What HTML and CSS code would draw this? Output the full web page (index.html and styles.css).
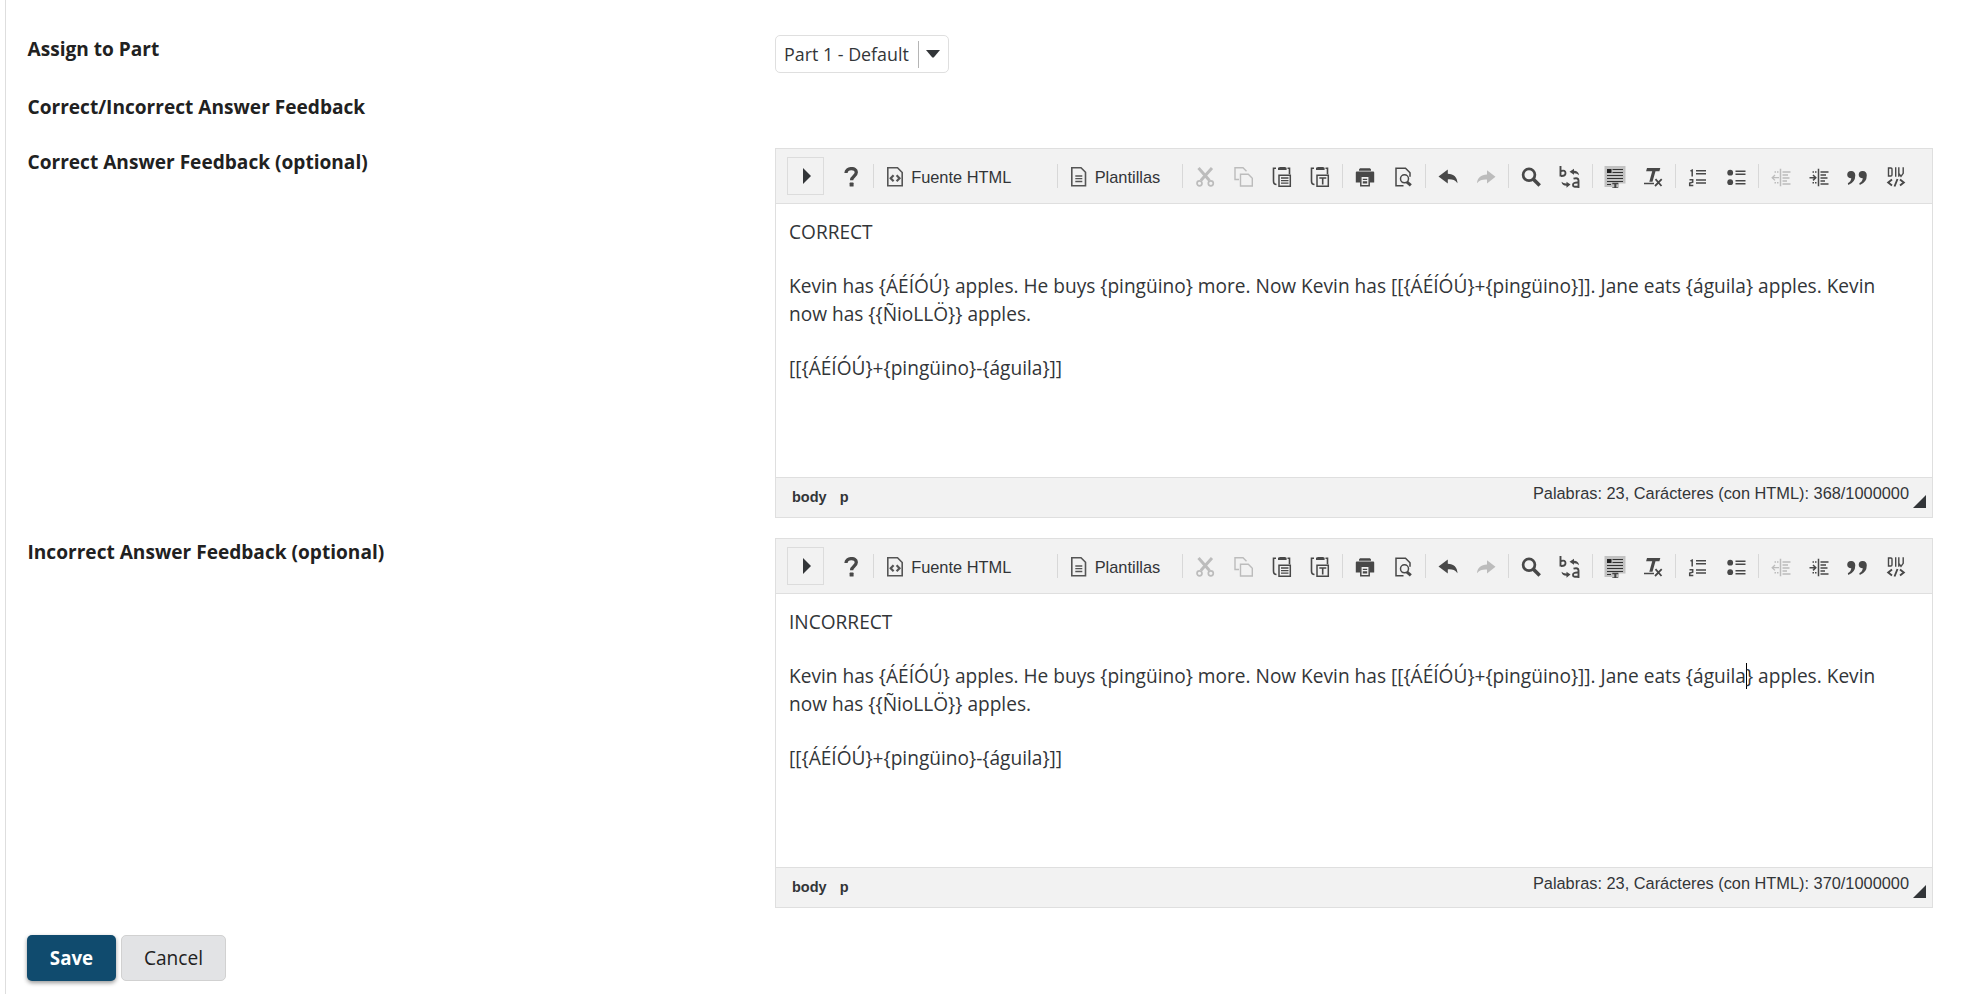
FILE: index.html
```
<!DOCTYPE html>
<html lang="en">
<head>
<meta charset="utf-8">
<title>Answer Feedback</title>
<link rel="stylesheet" href="styles.css">
</head>
<body>
<svg class="sprite" aria-hidden="true">
  <symbol id="help" viewBox="0 0 20 20"><path d="M5 6C5 0.5 15.3 0 15.3 5.3C15.3 9.3 10.7 9 10.6 13.2" fill="none" stroke="currentColor" stroke-width="3.300"/><rect x="8.600" y="15.600" width="4" height="4" rx=".7" fill="currentColor"/></symbol>
  <symbol id="source" viewBox="0 0 20 20"><path d="M2.800 .800h9.700l4.700 4.700V18.800H2.800z" fill="none" stroke="currentColor" stroke-width="1.600"/><path d="M8.600 8.300L5.700 11.300l2.900 3M11.600 8.300l2.900 3-2.900 3" fill="none" stroke="currentColor" stroke-width="2.200"/></symbol>
  <symbol id="template" viewBox="0 0 20 20"><path d="M2.800 .800h9.200l4.500 4.500V18.800H2.800z" fill="none" stroke="currentColor" stroke-width="1.600"/><path d="M6.300 9h7M6.300 11.700h7M6.300 14.500h7" stroke="currentColor" stroke-width="1.300"/></symbol>
  <symbol id="cut" viewBox="0 0 20 20"><path d="M3.500 1l11 12.500M17 1L5.800 13.500" fill="none" stroke="currentColor" stroke-width="3"/><circle cx="4.500" cy="16.300" r="2.500" fill="none" stroke="currentColor" stroke-width="1.700"/><circle cx="15.800" cy="16.300" r="2.500" fill="none" stroke="currentColor" stroke-width="1.700"/></symbol>
  <symbol id="copy" viewBox="0 0 20 20"><path d="M5 12.500H1V.700h8l3.500 3.500M6.500 7.200h7.800l4 4V19H6.500z" fill="none" stroke="currentColor" stroke-width="1.400"/></symbol>
  <symbol id="clipboard" viewBox="0 0 20 20"><path d="M4 1.300H1.500V14q0 3.500 3 3.500M15.500 1.300h2v6" fill="none" stroke="currentColor" stroke-width="1.600"/><path d="M6 3V.800L8 0h5l1.600.800V3z" fill="currentColor"/><path d="M7 8.300h11.300V19.200H7z" fill="none" stroke="currentColor" stroke-width="1.500"/></symbol>
  <symbol id="paste" viewBox="0 0 20 20"><use href="#clipboard"/><path d="M9 11h7.500M9 13.600h7.500M9 16.200h7.500" stroke="currentColor" stroke-width="1.300"/></symbol>
  <symbol id="pastetext" viewBox="0 0 20 20"><use href="#clipboard"/><path d="M9.300 11h7M12.700 11v6.500" stroke="currentColor" stroke-width="1.600"/></symbol>
  <symbol id="print" viewBox="0 0 20 20"><path d="M4 2.500L5 1.200h10l1 1.300v1.300H4zM.800 5.500q0-.900 1-.900h16.400q1 0 1 .900v10H15V9H5v6.500H.800z" fill="currentColor"/><path d="M5.800 9.300h8.400v9.500H5.800z" fill="none" stroke="currentColor" stroke-width="1.500"/><path d="M7.800 11.700h4.400v1.300H7.800zM7.800 14.300h4.400v2.300H7.800z" fill="currentColor"/></symbol>
  <symbol id="preview" viewBox="0 0 20 20"><path d="M10.500 18.800H3V1.200h9.500l4.500 4.500v4" fill="none" stroke="currentColor" stroke-width="1.500"/><circle cx="11.500" cy="11.800" r="4" fill="none" stroke="currentColor" stroke-width="1.500"/><path d="M13.800 14.800l4 3.500" stroke="currentColor" stroke-width="3"/></symbol>
  <symbol id="undo" viewBox="0 0 20 20"><path d="M.500 9.500L9.800 2.500v4.200c6 .300 9.600 3.500 9.700 9.500-2.500-3.500-5.500-4-9.700-3.800v4.100z" fill="currentColor"/></symbol>
  <symbol id="redo" viewBox="0 0 20 20"><path d="M19.500 9.800L11 3.300v4.200c-6 .300-9.800 3.500-10 8.800 2.500-3.500 5.800-4 10-3.800v4z" fill="currentColor"/></symbol>
  <symbol id="find" viewBox="0 0 20 20"><circle cx="8" cy="7.800" r="5.900" fill="none" stroke="currentColor" stroke-width="2.700"/><path d="M12.400 12.300l6.300 6.200" stroke="currentColor" stroke-width="3.600"/></symbol>
  <symbol id="replace" viewBox="0 0 22 22"><path d="M1.500 0v10.500M2 5q4.500-1.300 4.500 2T2 10M14.500 12.700q5-1.300 5 1.800V22M19 16.500q-5-.200-5 2.400t5 1.600" fill="none" stroke="currentColor" stroke-width="1.900"/><path d="M10.500 5.700l4.500-3v2q4.500 0 5 4.500-2-2.200-5-2v1.500zM11.500 18.500l-4 3.200v-2q-4.500 0-5-4 2 2 5 1.800v-1.700z" fill="currentColor"/></symbol>
  <symbol id="selectall" viewBox="0 0 22 22"><path d="M.500 0h21v17.500H15V21H.500z" fill="#c2c2c2"/><path d="M3 3h4.500v4H3z" fill="#222"/><path d="M8.500 3.500H19M8.500 6.500H19M3 9.500h16M3 12.500h16M3 15.500h16M3 18.500h4" stroke="#333" stroke-width="1"/><path d="M8.300 16.800h6v1.500h-2v3h2V22h-6v-.800h2v-3h-2z" fill="#444"/></symbol>
  <symbol id="noformat" viewBox="0 0 20 20"><path d="M4 1h13.300l-.900 3.300H12.500L9.500 14.700H6.300L9.200 4.300H3.100zM1 15.800h10v1.500H1z" fill="currentColor"/><path d="M12.500 12.200l6 6.800M18.700 12.200l-6.700 6.800" stroke="currentColor" stroke-width="1.800"/></symbol>
  <symbol id="numbered" viewBox="0 0 20 20"><path d="M2.500 4l1.700-.800v6.300M1.500 12.800h3.200v2.300l-3 1v2.300H5.300" fill="none" stroke="currentColor" stroke-width="1.500"/><path d="M8 3.800h10M8 6.800h10M8 12.900h10M8 15.900h10" stroke="currentColor" stroke-width="1.500"/></symbol>
  <symbol id="bulleted" viewBox="0 0 20 20"><circle cx="4.200" cy="5.700" r="2.900" fill="currentColor"/><circle cx="4.200" cy="15.200" r="2.900" fill="currentColor"/><path d="M9.500 4.200h10M9.500 7.200h10M9.500 13.700h10M9.500 16.700h10" stroke="currentColor" stroke-width="1.500"/></symbol>
  <symbol id="indentlines" viewBox="0 0 20 20"><path d="M9.500 1.700v17.500M11.500 5h8M11.500 8h5.500M11.500 11h7M11.500 14h4.500M11.500 17h8" stroke="currentColor" stroke-width="1.500"/><path d="M3.500 5h4.500M3.500 15.800h4.500" stroke="currentColor" stroke-width="1.500" stroke-dasharray="1.500 1"/></symbol>
  <symbol id="outdent" viewBox="0 0 20 20"><use href="#indentlines"/><path d="M8 10.700H1.500M4 8L1.200 10.700 4 13.400" fill="none" stroke="currentColor" stroke-width="1.300"/></symbol>
  <symbol id="indent" viewBox="0 0 20 20"><use href="#indentlines"/><path d="M.500 10.700H6M4 8l2.800 2.700L4 13.400" fill="none" stroke="currentColor" stroke-width="1.500"/></symbol>
  <symbol id="quote" viewBox="0 0 20 20"><path id="comma" d="M4.300 4A3.900 3.900 0 0 0 .200 7.700Q.300 11 4.300 11.300Q4 14.800.800 16.200L1.300 18Q8.300 15.500 8.300 8.300Q8.200 4.200 4.300 4z" fill="currentColor"/><use href="#comma" x="11.500"/></symbol>
  <symbol id="div" viewBox="0 0 20 20"><path d="M2.500 1v8h2.300q1.200 0 1.200-1.300V2.300Q6 1 4.800 1zM9.700.300v9.400M12.800 9.700V.300M12.800 .300v6l2.200 3 2.200-3v-6" fill="none" stroke="currentColor" stroke-width="1.400"/><path d="M6 12.500l-3.800 3 3.800 3M14 12.500l3.800 3-3.800 3M11.500 12l-3 7.500" fill="none" stroke="currentColor" stroke-width="1.900"/></symbol>
</svg>

<main class="panel">
  <div class="row row-part">
    <div class="label">Assign to Part</div>
    <div class="select"><span class="select-text">Part 1 - Default</span><svg class="caret" viewBox="0 0 14 8"><path d="M0 0h14L7.700 7.500H6.300z" fill="#323538"/></svg></div>
  </div>
  <div class="row row-heading"><div class="label">Correct/Incorrect Answer Feedback</div></div>

  <div class="row row-editor">
    <div class="label">Correct Answer Feedback (optional)</div>
    <section class="editor">
      <div class="toolbar">
        <span class="expand"><svg viewBox="0 0 8 16"><path d="M0 0l8 8-8 8z" fill="#323538"/></svg></span>
        <span class="btn btn-help"><svg><use href="#help"/></svg></span><i class="sep"></i>
        <span class="textbtn textbtn-source"><svg><use href="#source"/></svg>Fuente HTML</span><i class="sep"></i>
        <span class="textbtn textbtn-template"><svg><use href="#template"/></svg>Plantillas</span><i class="sep"></i>
        <span class="btn off"><svg><use href="#cut"/></svg></span><span class="btn off"><svg><use href="#copy"/></svg></span><span class="btn"><svg><use href="#paste"/></svg></span><span class="btn"><svg><use href="#pastetext"/></svg></span><i class="sep"></i>
        <span class="btn"><svg><use href="#print"/></svg></span><span class="btn"><svg><use href="#preview"/></svg></span><i class="sep"></i>
        <span class="btn"><svg><use href="#undo"/></svg></span><span class="btn off"><svg><use href="#redo"/></svg></span><i class="sep"></i>
        <span class="btn"><svg><use href="#find"/></svg></span><span class="btn large"><svg><use href="#replace"/></svg></span><i class="sep"></i>
        <span class="btn large"><svg><use href="#selectall"/></svg></span><span class="btn"><svg><use href="#noformat"/></svg></span><i class="sep"></i>
        <span class="btn"><svg><use href="#numbered"/></svg></span><span class="btn"><svg><use href="#bulleted"/></svg></span><i class="sep"></i>
        <span class="btn off"><svg><use href="#outdent"/></svg></span><span class="btn"><svg><use href="#indent"/></svg></span><span class="btn"><svg><use href="#quote"/></svg></span><span class="btn"><svg><use href="#div"/></svg></span>
      </div>
      <div class="content">
        <p>CORRECT</p>
        <p>Kevin has {ÁÉÍÓÚ} apples. He buys {pingüino} more. Now Kevin has [[{ÁÉÍÓÚ}+{pingüino}]]. Jane eats {águila} apples. Kevin<br>now has {{ÑioLLÖ}} apples.</p>
        <p>[[{ÁÉÍÓÚ}+{pingüino}-{águila}]]</p>
      </div>
      <div class="status"><span class="path">body</span><span class="path">p</span><span class="count">Palabras: 23, Carácteres (con HTML): 368/1000000</span><svg class="grip" viewBox="0 0 13 13"><path d="M13 0v13H0z" fill="#323538"/></svg></div>
    </section>
  </div>

  <div class="row row-editor">
    <div class="label">Incorrect Answer Feedback (optional)</div>
    <section class="editor">
      <div class="toolbar">
        <span class="expand"><svg viewBox="0 0 8 16"><path d="M0 0l8 8-8 8z" fill="#323538"/></svg></span>
        <span class="btn btn-help"><svg><use href="#help"/></svg></span><i class="sep"></i>
        <span class="textbtn textbtn-source"><svg><use href="#source"/></svg>Fuente HTML</span><i class="sep"></i>
        <span class="textbtn textbtn-template"><svg><use href="#template"/></svg>Plantillas</span><i class="sep"></i>
        <span class="btn off"><svg><use href="#cut"/></svg></span><span class="btn off"><svg><use href="#copy"/></svg></span><span class="btn"><svg><use href="#paste"/></svg></span><span class="btn"><svg><use href="#pastetext"/></svg></span><i class="sep"></i>
        <span class="btn"><svg><use href="#print"/></svg></span><span class="btn"><svg><use href="#preview"/></svg></span><i class="sep"></i>
        <span class="btn"><svg><use href="#undo"/></svg></span><span class="btn off"><svg><use href="#redo"/></svg></span><i class="sep"></i>
        <span class="btn"><svg><use href="#find"/></svg></span><span class="btn large"><svg><use href="#replace"/></svg></span><i class="sep"></i>
        <span class="btn large"><svg><use href="#selectall"/></svg></span><span class="btn"><svg><use href="#noformat"/></svg></span><i class="sep"></i>
        <span class="btn"><svg><use href="#numbered"/></svg></span><span class="btn"><svg><use href="#bulleted"/></svg></span><i class="sep"></i>
        <span class="btn off"><svg><use href="#outdent"/></svg></span><span class="btn"><svg><use href="#indent"/></svg></span><span class="btn"><svg><use href="#quote"/></svg></span><span class="btn"><svg><use href="#div"/></svg></span>
      </div>
      <div class="content">
        <p>INCORRECT</p>
        <p>Kevin has {ÁÉÍÓÚ} apples. He buys {pingüino} more. Now Kevin has [[{ÁÉÍÓÚ}+{pingüino}]]. Jane eats {águila<span class="cursor"></span>} apples. Kevin<br>now has {{ÑioLLÖ}} apples.</p>
        <p>[[{ÁÉÍÓÚ}+{pingüino}-{águila}]]</p>
      </div>
      <div class="status"><span class="path">body</span><span class="path">p</span><span class="count">Palabras: 23, Carácteres (con HTML): 370/1000000</span><svg class="grip" viewBox="0 0 13 13"><path d="M13 0v13H0z" fill="#323538"/></svg></div>
    </section>
  </div>

  <div class="actions"><button class="action save">Save</button><button class="action cancel">Cancel</button></div>
</main>
</body>
</html>
```

FILE: styles.css
```
* { box-sizing: border-box; }
body {
  margin: 0;
  background: #fff;
  color: #212121;
  font-family: "Open Sans", sans-serif;
  font-size: 19.100px;
}
.sprite { display: none; }
.panel {
  height: 994px;
  margin-left: 5px;
  padding: 35px 44px 0 21px;
  border-left: 1px solid #dedede;
  overflow: hidden;
}
.row { display: grid; grid-template-columns: 748px 1158px; }
.row-part { height: 58px; }
.row-heading { height: 55px; }
.row-editor { height: 390px; }
.label { padding-left: .5px; font-weight: 700; font-size: 19.100px; line-height: 29px; white-space: nowrap; }
.select {
  display: flex;
  align-items: center;
  width: 174px;
  height: 38px;
  padding-left: 8px;
  border: 1px solid #dfdfdf;
  border-radius: 5px;
  color: #323538;
}
.select-text {
  flex: none;
  height: 27px;
  width: 135px;
  border-right: 1px solid #b5b5b5;
  font-size: 17.850px;
  line-height: 27px;
  white-space: nowrap;
}
.caret { width: 14px; height: 8px; margin-left: 7px; }
.editor {
  display: flex;
  flex-direction: column;
  height: 370px;
  border: 1px solid #dfdfdf;
}
.toolbar {
  display: flex;
  align-items: center;
  flex: none;
  height: 55px;
  padding-left: 11px;
  background: #f2f2f2;
  border-bottom: 1px solid #dfdfdf;
  color: #484848;
}
.expand {
  display: flex;
  align-items: center;
  justify-content: center;
  width: 37px;
  height: 38px;
  padding-left: 3px;
  border: 1px solid #dcdcdc;
}
.expand svg { width: 8px; height: 16px; }
.btn { display: flex; flex: none; justify-content: center; width: 38.140px; padding-top: 1px; }
.btn-help { margin-left: 8px; }
.btn svg, .textbtn svg { width: 20px; height: 20px; flex: none; }
.btn.large svg { width: 22px; height: 22px; }
.off { color: #bcbcbc; }
.sep { flex: none; width: 1px; height: 24px; margin: 0 3px; background: #d8d8d8; }
.textbtn {
  display: flex;
  flex: none;
  align-items: center;
  gap: 6px;
  padding: 1px 0 0 8px;
  color: #323538;
  font: 16.400px/22px "Liberation Sans", Arial, sans-serif;
  white-space: nowrap;
}
.textbtn svg { color: #555; }
.textbtn-source { width: 176.500px; }
.textbtn-template { width: 118.800px; }
.content {
  flex: 1;
  padding: 14px 13px 0;
  color: #323538;
  line-height: 28px;
  white-space: nowrap;
}
.content p { margin: 0 0 26px; }
.cursor { display: inline-block; width: 1px; height: 26px; margin-right: -1px; background: #000; vertical-align: -6px; }
.status {
  display: flex;
  flex: none;
  height: 40px;
  padding: 0 6px 0 16px;
  background: #f2f2f2;
  border-top: 1px solid #dfdfdf;
  color: #323538;
  font: 16.350px/30px "Liberation Sans", Arial, sans-serif;
}
.path { margin-right: 13px; font: 700 14.500px/38px "Liberation Sans", Arial, sans-serif; }
.count { margin-left: auto; }
.grip { width: 13px; height: 13px; margin: 17px 0 0 4px; }
.actions { display: flex; gap: 5px; margin-top: 7px; }
.action {
  height: 46px;
  padding: 0;
  border-radius: 5px;
  font: 19.100px/28px "Open Sans", sans-serif;
}
.save { width: 89px; border: 0; background: #104b6e; color: #fff; font-weight: 700; font-size: 18.700px; box-shadow: 0 2px 4px rgba(0,0,0,.4); }
.cancel { width: 105px; border: 1px solid #d1d1d1; background: #e2e3e5; color: #212121; }
```
